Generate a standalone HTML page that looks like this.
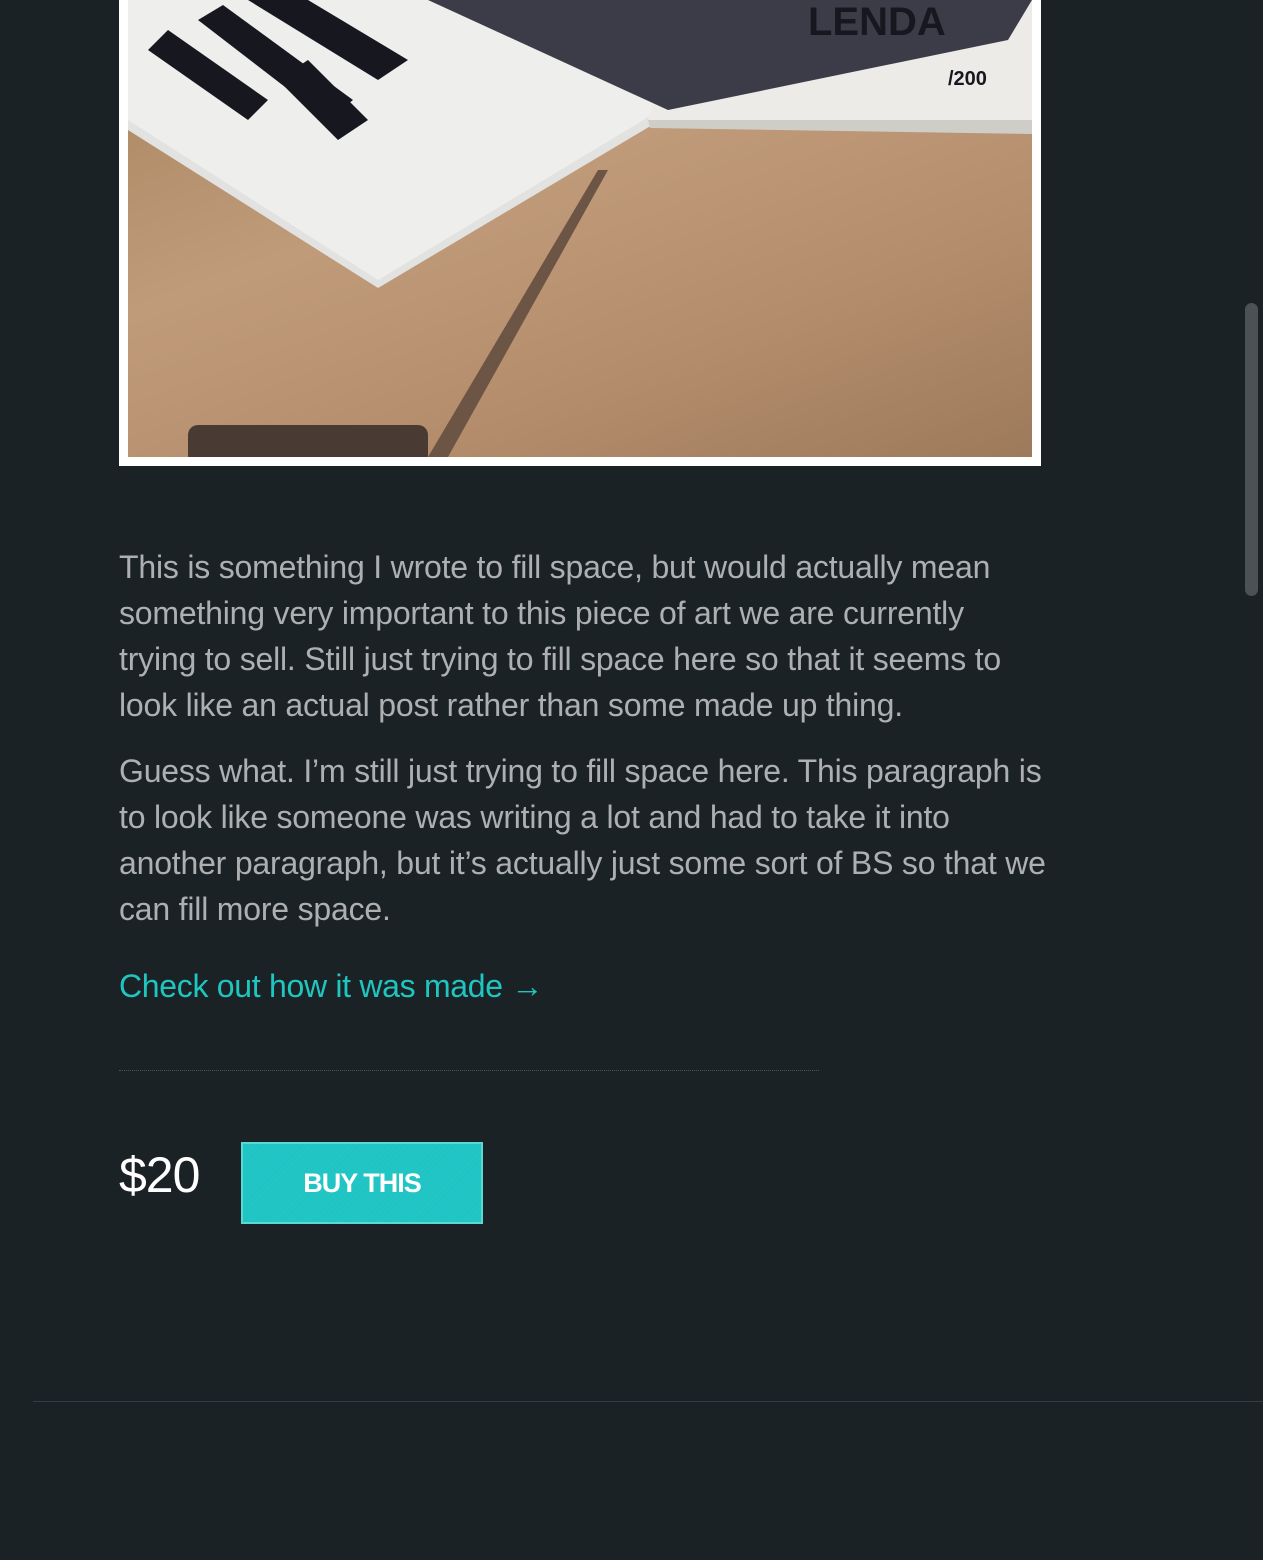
<!DOCTYPE html>
<html><head><meta charset="utf-8"><style>
html,body{margin:0;padding:0;background:#1b2226;width:1263px;height:1560px;overflow:hidden;position:relative;font-family:"Liberation Sans",sans-serif}
.frame{position:absolute;left:119px;top:-10px;width:922px;height:476px;background:#fff}
.photo{position:absolute;left:9px;top:10px;width:904px;height:457px;overflow:hidden;background:linear-gradient(160deg,#a7835f 0%,#c09b7a 40%,#b48d6c 70%,#9d7a5b 100%)}
.p{position:absolute;left:119px;color:#adb0b1;font-size:32px;line-height:46px;letter-spacing:-0.2px;white-space:nowrap;margin:0}
.link{position:absolute;left:119px;top:968px;color:#1fc6c0;font-size:32px;letter-spacing:-0.3px}
.dots{position:absolute;left:119px;top:1070px;width:700px;border-top:1px dotted #4a5357}
.price{position:absolute;left:119px;top:1146px;color:#fff;font-size:50px;letter-spacing:-1px}
.btn{position:absolute;left:241px;top:1142px;width:238px;height:78px;border:2px solid #5ad8d4;background:repeating-linear-gradient(135deg,#1fc7c6 0 2px,#22c3c2 2px 4px);color:#fff;font-weight:bold;font-size:27px;text-align:center;line-height:78px;letter-spacing:-1px}
.hr{position:absolute;left:33px;top:1401px;width:1230px;border-top:1px solid #343d42}
.sb{position:absolute;left:1245px;top:303px;width:13px;height:293px;border-radius:7px;background:#4a5256}
</style></head><body>
<div class="frame"><div class="photo">
<svg width="904" height="457" viewBox="0 0 904 457">
<polygon points="0,130 250,288 600,80 620,0 0,0" fill="#e2e2e0"/>
<polygon points="0,120 250,280 590,75 600,0 0,0" fill="#eeeeec"/>
<polygon points="520,120 904,120 904,0 560,0" fill="#ecebe8"/>
<polygon points="522,128 904,134 904,120 520,120" fill="#cfcdc8"/>
<polygon points="300,0 540,110 880,40 904,0" fill="#3c3c48"/>
<g fill="#17171f">
<polygon points="20,50 120,120 140,100 40,30"/>
<polygon points="70,20 200,120 225,100 95,5"/>
<polygon points="120,0 250,80 280,60 180,0"/>
<polygon points="150,80 210,140 240,120 180,60"/>
<text x="680" y="35" font-size="40" font-weight="bold" font-family="Liberation Sans">LENDA</text>
<text x="820" y="85" font-size="20" font-weight="bold" font-family="Liberation Sans">/200</text>
</g>
<polygon points="300,457 470,170 480,170 320,457" fill="#6d5545"/>
<rect x="60" y="425" width="240" height="40" fill="#4a3a34" rx="10"/>
</svg></div></div>
<p class="p" style="top:544px">This is something I wrote to fill space, but would actually mean<br>something very important to this piece of art we are currently<br>trying to sell. Still just trying to fill space here so that it seems to<br>look like an actual post rather than some made up thing.</p>
<p class="p" style="top:748px">Guess what. I’m still just trying to fill space here. This paragraph is<br>to look like someone was writing a lot and had to take it into<br>another paragraph, but it’s actually just some sort of BS so that we<br>can fill more space.</p>
<div class="link">Check out how it was made →</div>
<div class="dots"></div>
<div class="price">$20</div>
<div class="btn">BUY THIS</div>
<div class="hr"></div>
<div class="sb"></div>
</body></html>
